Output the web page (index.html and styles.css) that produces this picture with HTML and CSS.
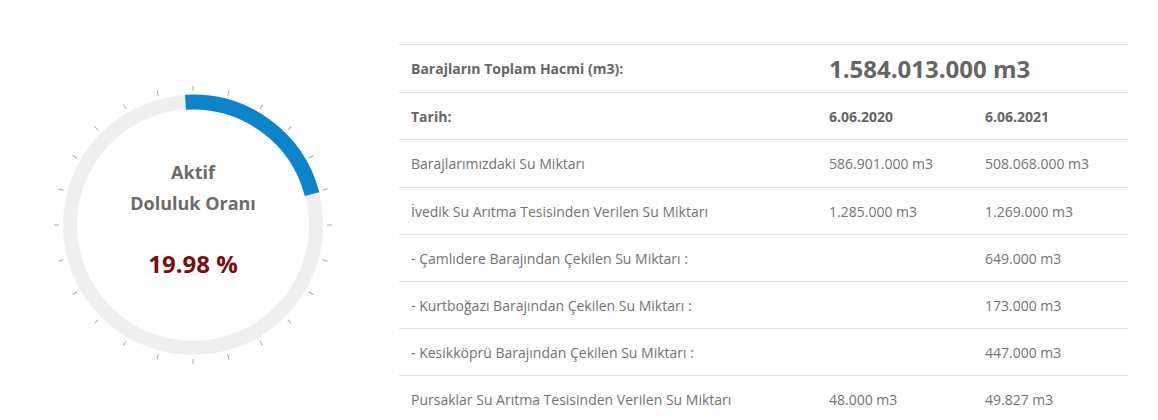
FILE: index.html
```html
<!DOCTYPE html>
<html lang="tr">
<head>
<meta charset="utf-8">
<link rel="stylesheet" href="styles.css">
</head>
<body>
<div class="page">
  <div class="gauge-col">
    <div class="gauge">
      <svg class="gauge-svg" width="290" height="290" viewBox="0 0 290 290">
        <circle cx="145" cy="145" r="123" fill="none" stroke="#efefef" stroke-width="14"/>
        <path d="M137.49 22.23 A123 123 0 0 1 264.08 114.20" fill="none" stroke="#0a85cc" stroke-width="15"/>
        <g stroke="#a8a8a8" stroke-width="1">
          <line x1="145" y1="6" x2="145" y2="11" transform="rotate(0 145 145)"/>
          <line x1="145" y1="6" x2="145" y2="11" transform="rotate(15 145 145)"/>
          <line x1="145" y1="6" x2="145" y2="11" transform="rotate(30 145 145)"/>
          <line x1="145" y1="6" x2="145" y2="11" transform="rotate(45 145 145)"/>
          <line x1="145" y1="6" x2="145" y2="11" transform="rotate(60 145 145)"/>
          <line x1="145" y1="6" x2="145" y2="11" transform="rotate(75 145 145)"/>
          <line x1="145" y1="6" x2="145" y2="11" transform="rotate(90 145 145)"/>
          <line x1="145" y1="6" x2="145" y2="11" transform="rotate(105 145 145)"/>
          <line x1="145" y1="6" x2="145" y2="11" transform="rotate(120 145 145)"/>
          <line x1="145" y1="6" x2="145" y2="11" transform="rotate(135 145 145)"/>
          <line x1="145" y1="6" x2="145" y2="11" transform="rotate(150 145 145)"/>
          <line x1="145" y1="6" x2="145" y2="11" transform="rotate(165 145 145)"/>
          <line x1="145" y1="6" x2="145" y2="11" transform="rotate(180 145 145)"/>
          <line x1="145" y1="6" x2="145" y2="11" transform="rotate(195 145 145)"/>
          <line x1="145" y1="6" x2="145" y2="11" transform="rotate(210 145 145)"/>
          <line x1="145" y1="6" x2="145" y2="11" transform="rotate(225 145 145)"/>
          <line x1="145" y1="6" x2="145" y2="11" transform="rotate(240 145 145)"/>
          <line x1="145" y1="6" x2="145" y2="11" transform="rotate(255 145 145)"/>
          <line x1="145" y1="6" x2="145" y2="11" transform="rotate(270 145 145)"/>
          <line x1="145" y1="6" x2="145" y2="11" transform="rotate(285 145 145)"/>
          <line x1="145" y1="6" x2="145" y2="11" transform="rotate(300 145 145)"/>
          <line x1="145" y1="6" x2="145" y2="11" transform="rotate(315 145 145)"/>
          <line x1="145" y1="6" x2="145" y2="11" transform="rotate(330 145 145)"/>
          <line x1="145" y1="6" x2="145" y2="11" transform="rotate(345 145 145)"/>
        </g>
      </svg>
      <div class="gauge-text">
        <div class="gauge-title">Aktif<br>Doluluk Oranı</div>
        <div class="gauge-value">19.98 %</div>
      </div>
    </div>
  </div>
  <div class="table-col">
    <table class="dam-table">
      <colgroup>
        <col class="c1"><col class="c2"><col class="c3">
      </colgroup>
      <tr class="row-tall">
        <th>Barajların Toplam Hacmi (m3):</th>
        <td colspan="2" class="total">1.584.013.000 m3</td>
      </tr>
      <tr>
        <th>Tarih:</th>
        <th>6.06.2020</th>
        <th>6.06.2021</th>
      </tr>
      <tr class="row-tall">
        <td>Barajlarımızdaki Su Miktarı</td>
        <td>586.901.000 m3</td>
        <td>508.068.000 m3</td>
      </tr>
      <tr>
        <td>İvedik Su Arıtma Tesisinden Verilen Su Miktarı</td>
        <td>1.285.000 m3</td>
        <td>1.269.000 m3</td>
      </tr>
      <tr>
        <td>- Çamlıdere Barajından Çekilen Su Miktarı :</td>
        <td></td>
        <td>649.000 m3</td>
      </tr>
      <tr>
        <td>- Kurtboğazı Barajından Çekilen Su Miktarı :</td>
        <td></td>
        <td>173.000 m3</td>
      </tr>
      <tr>
        <td>- Kesikköprü Barajından Çekilen Su Miktarı :</td>
        <td></td>
        <td>447.000 m3</td>
      </tr>
      <tr>
        <td>Pursaklar Su Arıtma Tesisinden Verilen Su Miktarı</td>
        <td>48.000 m3</td>
        <td>49.827 m3</td>
      </tr>
    </table>
  </div>
</div>
</body>
</html>
```

FILE: styles.css
```css
html, body {
  margin: 0;
  padding: 0;
  background: #ffffff;
}
body {
  font-family: "Open Sans", "Liberation Sans", sans-serif;
  color: #6f6f6f;
  overflow: hidden;
}
.page {
  display: flex;
  align-items: flex-start;
}
.gauge-col {
  width: 386px;
  flex: none;
  display: flex;
  justify-content: center;
  padding-top: 80px;
}
.gauge {
  display: grid;
  width: 290px;
  height: 290px;
}
.gauge-svg {
  grid-area: 1 / 1;
  display: block;
}
.gauge-text {
  grid-area: 1 / 1;
  display: flex;
  flex-direction: column;
  align-items: center;
  padding-top: 77px;
  text-align: center;
}
.gauge-title {
  font-size: 18px;
  font-weight: 700;
  line-height: 31px;
  color: #6b6b6b;
}
.gauge-value {
  margin-top: 30px;
  font-size: 24px;
  font-weight: 700;
  color: #7a0e0e;
  line-height: 30px;
}
.table-col {
  flex: none;
  margin-left: 13px;
  padding-top: 44px;
}
.dam-table {
  width: 729px;
  border-collapse: collapse;
  table-layout: fixed;
  font-size: 14px;
}
.c1 { width: 418px; }
.c2 { width: 156px; }
.c3 { width: 155px; }
.dam-table th,
.dam-table td {
  border-top: 1px solid #e3e3e3;
  padding: 0 12px;
  height: 46px;
  text-align: left;
  vertical-align: middle;
  white-space: nowrap;
}
.dam-table th {
  font-weight: 700;
  color: #666666;
}
.dam-table td {
  color: #737373;
}
.row-tall th,
.row-tall td {
  height: 47px;
}
.dam-table td.total {
  font-size: 24px;
  font-weight: 700;
  color: #666666;
}
```
